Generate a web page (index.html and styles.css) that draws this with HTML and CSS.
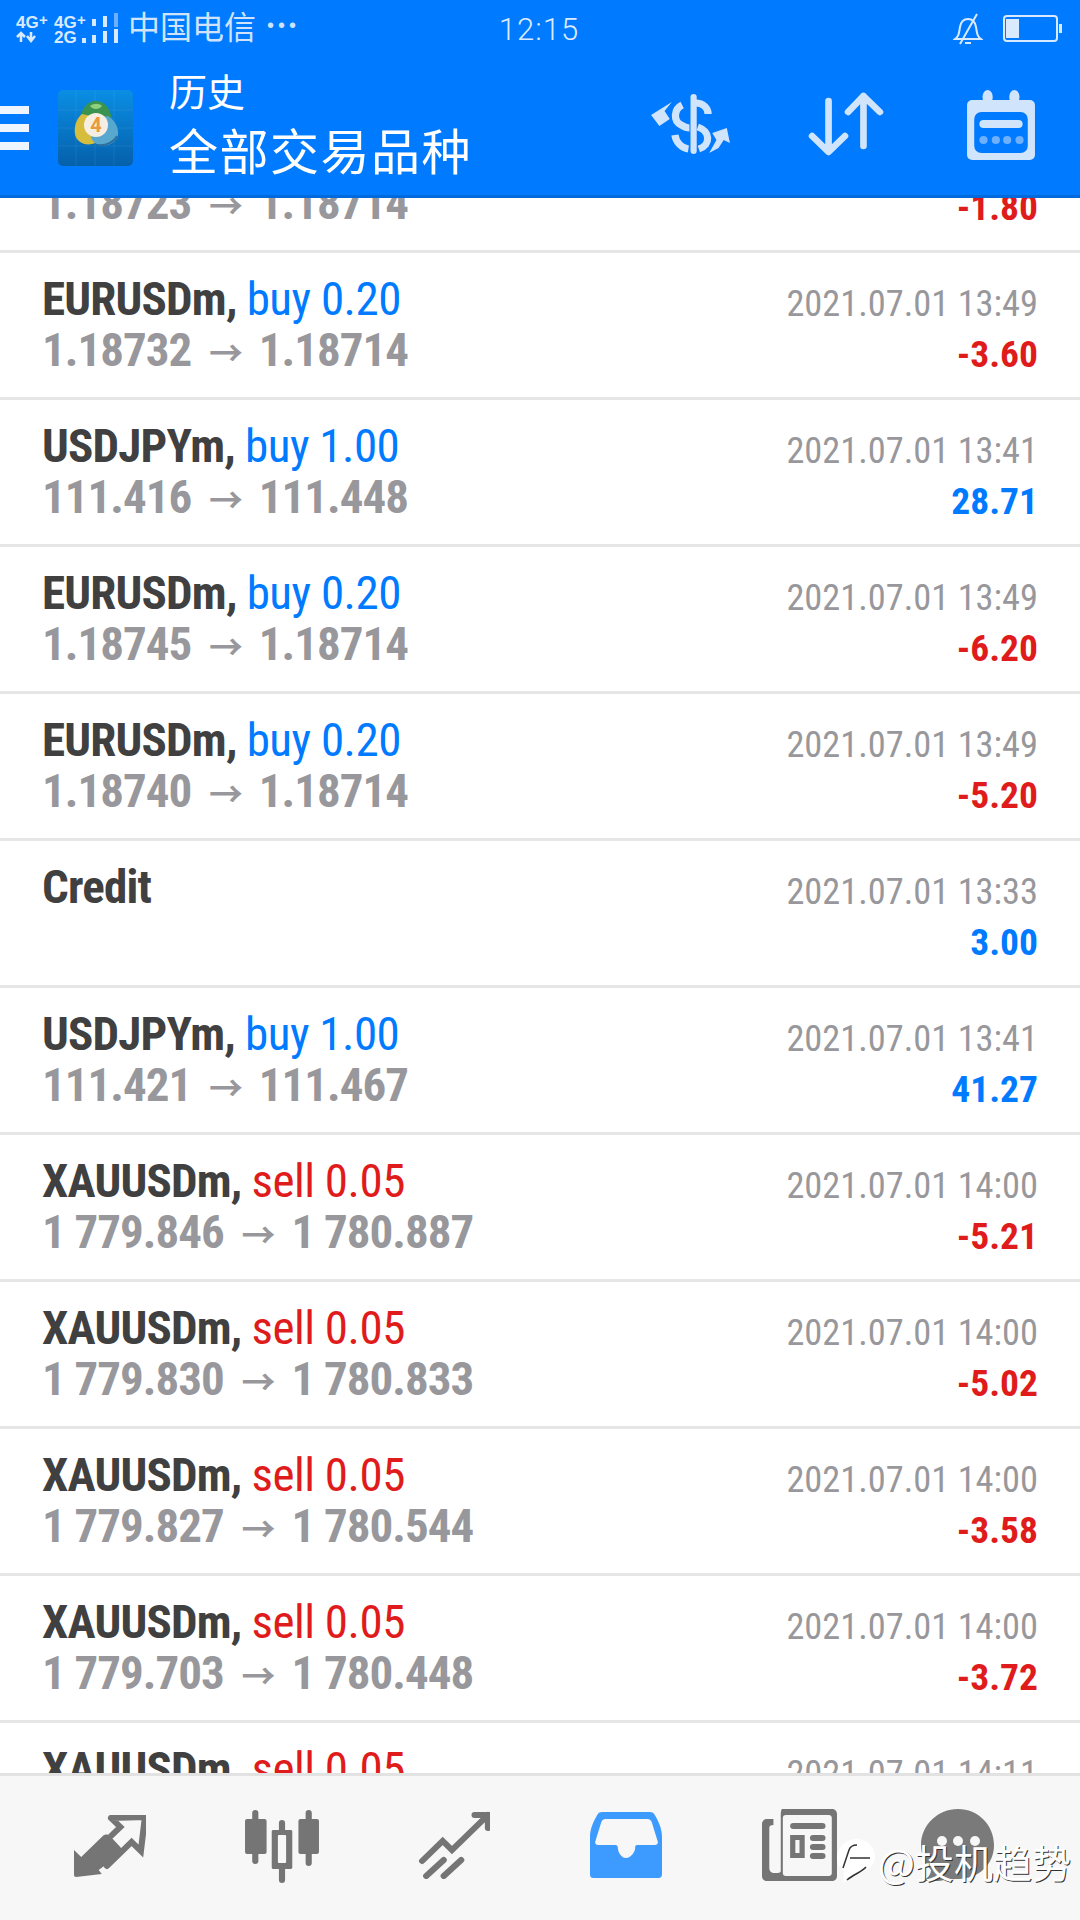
FILE: index.html
```html
<!DOCTYPE html>
<html lang="zh-CN">
<head>
    <meta charset="UTF-8">
    <meta name="viewport" content="width=device-width, initial-scale=1.0">
    <title>历史</title>
    <link rel="stylesheet" href="styles.css">
</head>
<body>
    <div class="screen">
        <header class="header">
            <div class="status">
                <div class="status-left">
                    <svg class="signal" width="105" height="32" viewBox="15 12 105 32">
                        <text x="16" y="27" class="net">4G</text><text x="39" y="24" class="net-sm">+</text>
                        <path d="M21 41v-7M17 36l4-4 4 4M31 31v7M27 35l4 5 4-5" class="net-arrows"/>
                        <text x="54" y="27" class="net">4G</text><text x="77" y="24" class="net-sm">+</text>
                        <text x="54" y="42" class="net">2G</text>
                        <rect x="82" y="37" width="4" height="5" class="bar"/>
                        <rect x="92" y="18" width="4" height="7" class="bar"/><rect x="92" y="34" width="4" height="8" class="bar"/>
                        <rect x="103" y="15" width="4" height="11" class="bar"/><rect x="103" y="30" width="4" height="12" class="bar"/>
                        <rect x="114" y="12" width="4" height="14" class="bar-dim"/><rect x="114" y="28" width="4" height="14" class="bar"/>
                    </svg>
                    <span class="carrier">中国电信</span>
                    <span class="dots">•••</span>
                </div>
                <div class="clock">12:15</div>
                <div class="status-right">
                    <svg width="30" height="32" viewBox="0 0 30 32" class="bell">
                        <path d="M2 26c4-3 4-6 5-12 1-6 4-8 8-8s7 2 8 8c1 6 1 9 5 12z"/>
                        <path d="M24 1 7 31M12 30h6"/>
                    </svg>
                    <svg width="60" height="28" viewBox="0 0 60 28" class="battery">
                        <rect x="1" y="1" width="53" height="25" rx="3" class="batt-shell"/>
                        <rect x="3" y="4" width="13" height="19" class="batt-level"/>
                        <rect x="56" y="9" width="3" height="9" class="batt-level"/>
                    </svg>
                </div>
            </div>
            <div class="toolbar">
                <div class="menu"><span></span><span></span><span></span></div>
                <svg class="logo" width="78" height="80" viewBox="57 88 78 80">
                    <defs>
                        <linearGradient id="logoBg" x1="0" y1="0" x2="0" y2="1">
                            <stop offset="0" stop-color="#0a8ee4"/><stop offset="1" stop-color="#0560ab"/>
                        </linearGradient>
                    </defs>
                    <rect x="58" y="90" width="75" height="76" rx="5" fill="url(#logoBg)"/>
                    <path d="M58 110h75M58 128h75M58 146h75M76 90v76M95 90v76M114 90v76" class="logo-grid"/>
                    <path d="M96 101c9 0 15 8 16 20l-16 6-16-6c1-12 7-20 16-20z" fill="#3a9450"/>
                    <path d="M90 106c4-3 9-3 12 0-3 4-9 4-12 0z" fill="#8fd07f"/>
                    <path d="M82 114c-6 5-8 13-7 20 1 7 9 12 17 10 5-1 8-4 9-8l-10-20z" fill="#d6bd3e"/>
                    <path d="M108 116c7 4 11 12 10 19-1 7-10 12-18 10-5-1-8-4-9-8l10-20z" fill="#58a7cf"/>
                    <path d="M98 145c8 1 16-3 19-9" class="logo-edge"/>
                    <circle cx="96" cy="125" r="12" fill="#f6eee2"/>
                    <text x="96" y="132" class="logo-four">4</text>
                </svg>
                <div class="titles">
                    <div class="title-small">历史</div>
                    <div class="title-big">全部交易品种</div>
                </div>
                <div class="actions">
                    <svg width="83" height="66" viewBox="645 92 80 66" preserveAspectRatio="none">
                        <path d="M688 97v54" class="ico-line"/>
                        <path d="M702 114c0-6-5-11-12-11M677 105c-8 4-9 16-1 20 3 2 6 3 8 3M692 127c12 4 13 18 1 22M670 135c1 7 6 13 13 14" class="ico-thin"/>
                        <path d="M647 115l20-13-7 9 5 8-10 7z M703 153l7-13-4-7 14-5 3 15-6-3-5 8z" class="ico-fill"/>
                    </svg>
                    <svg width="76" height="66" viewBox="799 94 74 66" preserveAspectRatio="none">
                        <path d="M819 103v50M803 138l16 16 16-16M853 148V98M838 114l15-16 16 16" class="ico-arrow"/>
                    </svg>
                    <svg class="act-cal" width="70" height="72" viewBox="953 89 68 72" preserveAspectRatio="none">
                        <ellipse cx="974" cy="97" rx="5" ry="7" class="ico-fill"/>
                        <ellipse cx="1000" cy="97" rx="5" ry="7" class="ico-fill"/>
                        <rect x="954" y="100" width="66" height="60" rx="5" class="ico-fill"/>
                        <rect x="961" y="112" width="52" height="41" rx="7" class="cal-hole"/>
                        <rect x="966" y="120" width="42" height="8" rx="4" class="ico-fill"/>
                        <circle cx="970" cy="140" r="4" class="cal-dot"/><circle cx="982" cy="140" r="4" class="cal-dot"/>
                        <circle cx="993" cy="140" r="4" class="cal-dot"/><circle cx="1005" cy="140" r="4" class="cal-dot"/>
                    </svg>
                </div>
            </div>
        </header>

        <main class="list-wrap">
            <div class="list">
                <div class="row">
                    <div><div class="pair">EURUSDm, <span class="buy">buy 0.20</span></div>
                    <div class="prices">1.18723 <span class="arr">→</span> 1.18714</div></div>
                    <div class="right"><div class="date">2021.07.01 13:49</div><div class="amount neg">-1.80</div></div>
                </div>
                <div class="row">
                    <div><div class="pair">EURUSDm, <span class="buy">buy 0.20</span></div>
                    <div class="prices">1.18732 <span class="arr">→</span> 1.18714</div></div>
                    <div class="right"><div class="date">2021.07.01 13:49</div><div class="amount neg">-3.60</div></div>
                </div>
                <div class="row">
                    <div><div class="pair">USDJPYm, <span class="buy">buy 1.00</span></div>
                    <div class="prices">111.416 <span class="arr">→</span> 111.448</div></div>
                    <div class="right"><div class="date">2021.07.01 13:41</div><div class="amount pos">28.71</div></div>
                </div>
                <div class="row">
                    <div><div class="pair">EURUSDm, <span class="buy">buy 0.20</span></div>
                    <div class="prices">1.18745 <span class="arr">→</span> 1.18714</div></div>
                    <div class="right"><div class="date">2021.07.01 13:49</div><div class="amount neg">-6.20</div></div>
                </div>
                <div class="row">
                    <div><div class="pair">EURUSDm, <span class="buy">buy 0.20</span></div>
                    <div class="prices">1.18740 <span class="arr">→</span> 1.18714</div></div>
                    <div class="right"><div class="date">2021.07.01 13:49</div><div class="amount neg">-5.20</div></div>
                </div>
                <div class="row">
                    <div><div class="pair">Credit</div></div>
                    <div class="right"><div class="date">2021.07.01 13:33</div><div class="amount pos">3.00</div></div>
                </div>
                <div class="row">
                    <div><div class="pair">USDJPYm, <span class="buy">buy 1.00</span></div>
                    <div class="prices">111.421 <span class="arr">→</span> 111.467</div></div>
                    <div class="right"><div class="date">2021.07.01 13:41</div><div class="amount pos">41.27</div></div>
                </div>
                <div class="row">
                    <div><div class="pair">XAUUSDm, <span class="sell">sell 0.05</span></div>
                    <div class="prices">1 779.846 <span class="arr">→</span> 1 780.887</div></div>
                    <div class="right"><div class="date">2021.07.01 14:00</div><div class="amount neg">-5.21</div></div>
                </div>
                <div class="row">
                    <div><div class="pair">XAUUSDm, <span class="sell">sell 0.05</span></div>
                    <div class="prices">1 779.830 <span class="arr">→</span> 1 780.833</div></div>
                    <div class="right"><div class="date">2021.07.01 14:00</div><div class="amount neg">-5.02</div></div>
                </div>
                <div class="row">
                    <div><div class="pair">XAUUSDm, <span class="sell">sell 0.05</span></div>
                    <div class="prices">1 779.827 <span class="arr">→</span> 1 780.544</div></div>
                    <div class="right"><div class="date">2021.07.01 14:00</div><div class="amount neg">-3.58</div></div>
                </div>
                <div class="row">
                    <div><div class="pair">XAUUSDm, <span class="sell">sell 0.05</span></div>
                    <div class="prices">1 779.703 <span class="arr">→</span> 1 780.448</div></div>
                    <div class="right"><div class="date">2021.07.01 14:00</div><div class="amount neg">-3.72</div></div>
                </div>
                <div class="row">
                    <div><div class="pair">XAUUSDm, <span class="sell">sell 0.05</span></div></div>
                    <div class="right"><div class="date">2021.07.01 14:11</div></div>
                </div>
            </div>
        </main>

        <nav class="nav">
            <svg width="72" height="64" viewBox="0 0 70 64" preserveAspectRatio="none" class="nav-icon nav-trade">
                <path d="M0 35l7 7 21-21c2-2 5-2 7 0l10 11c2 2 2 5 0 7L24 55l3 4-25 3c-1 0-2-1-2-2z" class="nav-fill"/>
                <path d="M36 3l33-1-4 34-9-9-24 24M36 3l9 9-9 9" class="nav-line"/>
            </svg>
            <svg width="76" height="76" viewBox="235 1808 74 76" preserveAspectRatio="none" class="nav-icon">
                <path d="M243 1812a3 3 0 0 1 6 0v6h6a2 2 0 0 1 2 2v31a2 2 0 0 1-2 2h-6v7a3 3 0 0 1-6 0v-7h-5a2 2 0 0 1-2-2v-31a2 2 0 0 1 2-2h5z" class="nav-fill"/>
                <path d="M295 1812a3 3 0 0 1 6 0v6h5a2 2 0 0 1 2 2v31a2 2 0 0 1-2 2h-5v9a3 3 0 0 1-6 0v-9h-5a2 2 0 0 1-2-2v-31a2 2 0 0 1 2-2h5z" class="nav-fill"/>
                <path fill-rule="evenodd" d="M269 1822a3 3 0 0 1 6 0v7h6a2 2 0 0 1 1 1v37a2 2 0 0 1-2 1h-5v11a3 3 0 0 1-6 0v-11h-6a2 2 0 0 1-1-1v-37a2 2 0 0 1 1-1h6zM268 1835v26a1 1 0 0 0 1 1h6a1 1 0 0 0 1-1v-26a1 1 0 0 0-1-1h-6a1 1 0 0 0-1 1z" class="nav-fill"/>
            </svg>
            <svg width="72" height="68" viewBox="404 1811 70 68" preserveAspectRatio="none" class="nav-icon nav-chart">
                <path d="M408 1861l20-20 9 9 35-35M459 1815h13v13M412 1876l17-16M429 1876l17-16" class="nav-line"/>
            </svg>
            <svg width="72" height="66" viewBox="589 1812 70 66" preserveAspectRatio="none" class="nav-icon nav-inbox">
                <path fill-rule="evenodd" d="M601 1812h46c3 0 4 1 5 3 4 7 7 14 7 22v37c0 3-1 4-4 4h-62c-3 0-4-1-4-4v-37c0-8 3-15 7-22 1-2 2-3 5-3zM604 1819c-2 0-3 1-4 3l-6 20c0 2 1 3 3 3h17c1 0 2 1 2 2 0 6 4 11 8 11s9-5 9-11c0-1 0-2 2-2h17c2 0 3-1 3-3l-6-20c-1-2-2-3-4-3z" class="nav-active"/>
            </svg>
            <svg width="75" height="72" viewBox="756 1809 72 72" preserveAspectRatio="none" class="nav-icon nav-news">
                <path fill-rule="evenodd" d="M775 1809h48c3 0 5 2 5 5v62c0 3-2 5-5 5h-62c-3 0-5-2-5-5v-52c0-3 2-5 5-5h6v6c-3 0-4 1-4 3v40c0 3 2 5 5 5h3c2 0 3-1 3-2v-57c0-3 1-5 1-5zM779 1815c-2 0-3 1-3 3v55c0 2 1 3 3 3h41c2 0 3-1 3-3v-55c0-2-1-3-3-3z" class="nav-fill"/>
                <rect x="783" y="1823" width="34" height="6" rx="3" class="nav-fill"/>
                <path fill-rule="evenodd" d="M783 1835h14v23h-14zM788 1840v13h4v-13z" class="nav-fill"/>
                <rect x="802" y="1835" width="15" height="6" rx="3" class="nav-fill"/>
                <rect x="802" y="1844" width="15" height="6" rx="3" class="nav-fill"/>
                <rect x="802" y="1853" width="15" height="6" rx="3" class="nav-fill"/>
            </svg>
            <svg width="74" height="72" viewBox="921 1809 74 72" class="nav-icon nav-more">
                <path d="M958 1809c20 0 36 16 36 36s-16 34-36 34c-8 0-13 1-20 2h-15c5-3 8-7 8-11-6-6-10-15-10-25 0-20 17-36 37-36z" class="chat-fill"/>
                <circle cx="942" cy="1841" r="5" class="chat-dot"/><circle cx="958" cy="1841" r="5" class="chat-dot"/><circle cx="975" cy="1841" r="5" class="chat-dot"/>
            </svg>
        </nav>

        <div class="watermark">
            <svg width="40" height="46" viewBox="0 0 40 46" class="wm-logo">
                <path class="wm-bubble" d="M21 1C10 1 1 9 1 20c0 6 3 10 7 13l-1 12c5-5 10-9 16-10 9-2 16-8 16-16C39 9 31 1 21 1z"/>
                <path class="wm-mark" d="M7 30 13 12c1-3 4-5 8-5M14 20h20M30 29c-4 5-12 7-19 13"/>
            </svg>
            <span>@投机趋势</span>
        </div>
    </div>
</body>
</html>
```

FILE: styles.css
```css
* {
    box-sizing: border-box;
}
body {
    margin: 0;
    background: #fff;
    font-family: Roboto, "Noto Sans CJK SC", sans-serif;
}
.screen {
    position: relative;
    width: 1080px;
    height: 1920px;
    display: flex;
    flex-direction: column;
    overflow: hidden;
}

/* top blue area */
.header {
    height: 198px;
    flex: none;
    background: #007aff;
    border-bottom: 3px solid #0069dc;
    position: relative;
    z-index: 2;
    color: #fff;
}
.status {
    height: 58px;
    display: grid;
    grid-template-columns: 1fr auto 1fr;
    align-items: center;
    padding: 0 17px 0 15px;
}
.status-left {
    display: flex;
    align-items: center;
}
.signal {
    fill: #d9eaff;
}
.net {
    font: bold 17px "Liberation Sans", sans-serif;
}
.net-sm {
    font: bold 15px "Liberation Sans", sans-serif;
}
.net-arrows {
    fill: none;
    stroke: #d9eaff;
    stroke-width: 2.5;
}
.bar {
    fill: #d9eaff;
}
.bar-dim {
    fill: #6db0ff;
}
.carrier {
    margin-left: 8px;
    margin-bottom: 8px;
    font: 32px/1 "Noto Sans CJK SC", sans-serif;
    color: #cfe3fb;
}
.dots {
    margin-left: 11px;
    margin-bottom: 8px;
    font: 20px/1 "Liberation Sans", sans-serif;
    letter-spacing: 4px;
    color: #cfe3fb;
}
.clock {
    font: 300 31px/1 Roboto, sans-serif;
    letter-spacing: 1px;
    color: #dcebff;
}
.status-right {
    display: flex;
    justify-content: flex-end;
    align-items: center;
    gap: 20px;
}
.bell {
    fill: none;
    stroke: #d9eaff;
    stroke-width: 2;
}
.batt-shell {
    fill: none;
    stroke: #d9eaff;
    stroke-width: 2;
}
.batt-level {
    fill: #d9eaff;
}

.toolbar {
    display: flex;
    align-items: center;
    height: 137px;
    padding-top: 3px;
}
.menu {
    width: 29px;
    display: flex;
    flex-direction: column;
    gap: 10px;
}
.menu span {
    height: 8px;
    background: #eef5ff;
}
.logo {
    margin-left: 28px;
}
.logo-grid {
    fill: none;
    stroke: #fff;
    stroke-width: 1;
    opacity: 0.07;
}
.logo-edge {
    fill: none;
    stroke: #2b6f9c;
    stroke-width: 2;
}
.logo-four {
    font: bold 20px Roboto, sans-serif;
    fill: #e89a3c;
    text-anchor: middle;
}
.titles {
    margin-left: 34px;
    margin-bottom: 10px;
    font-family: "Noto Sans CJK SC", sans-serif;
}
.title-small {
    font-size: 38px;
    line-height: 48px;
}
.title-big {
    font-size: 49px;
    line-height: 62px;
    margin-top: 4px;
    letter-spacing: 1.5px;
}
.actions {
    margin-left: auto;
    margin-right: 44px;
    margin-bottom: 6px;
    display: flex;
    align-items: center;
    gap: 76px;
}
.act-cal {
    margin-left: 6px;
}
.ico-line {
    fill: none;
    stroke: #d0e4fc;
    stroke-width: 6;
    stroke-linecap: round;
}
.ico-thin {
    fill: none;
    stroke: #d0e4fc;
    stroke-width: 7;
}
.ico-fill {
    fill: #d0e4fc;
}
.ico-arrow {
    fill: none;
    stroke: #d0e4fc;
    stroke-width: 6.5;
    stroke-linecap: round;
    stroke-linejoin: round;
}
.cal-hole {
    fill: #007aff;
}
.cal-dot {
    fill: #6fb0fd;
}

/* trade list */
.list-wrap {
    flex: 1;
    overflow: hidden;
}
.list {
    margin-top: -92px;
}
.row {
    height: 147px;
    display: flex;
    justify-content: space-between;
    padding: 20px 42px 0 42px;
    border-bottom: 3px solid #e6e6e6;
}
.pair,
.prices {
    font-size: 47px;
    line-height: 51px;
    font-weight: 700;
    font-stretch: 75%;
    white-space: nowrap;
}
.pair {
    letter-spacing: -0.8px;
    color: #404040;
}
.buy,
.sell {
    font-weight: 400;
    letter-spacing: -0.5px;
}
.buy {
    color: #007aff;
}
.sell {
    color: #e01b1b;
}
.prices {
    letter-spacing: -1px;
    color: #98989c;
}
.arr {
    font-size: 34px;
    font-weight: 700;
    margin: 0 7px 0 8px;
}
.right {
    text-align: right;
    padding-top: 5px;
}
.date {
    font-size: 36.4px;
    line-height: 51px;
    font-stretch: 75%;
    color: #98989c;
}
.amount {
    font-size: 37.5px;
    line-height: 51px;
    font-weight: 700;
    font-stretch: 75%;
}
.neg {
    color: #e01b1b;
}
.pos {
    color: #007aff;
}

/* bottom tabs */
.nav {
    height: 147px;
    flex: none;
    background: #f7f7f7;
    border-top: 3px solid #e2e2e2;
    display: flex;
    align-items: flex-start;
    gap: 98px;
    padding: 33px 0 0 74px;
    position: relative;
    z-index: 2;
}
.nav-icon {
    flex: none;
}
.nav-trade {
    margin-top: 6px;
}
.nav-chart {
    margin-top: 2px;
}
.nav-inbox {
    margin-top: 3px;
    margin-left: 2px;
}
.nav-news {
    margin-left: 2px;
}
.nav-more {
    margin-left: -14px;
}
.nav-fill {
    fill: #757575;
}
.nav-line {
    fill: none;
    stroke: #757575;
    stroke-width: 6;
    stroke-linecap: round;
}
.nav-active {
    fill: #3d9bff;
}
.chat-fill {
    fill: #7a7a7a;
}
.chat-dot {
    fill: #f7f7f7;
}

/* watermark over the tabs */
.watermark {
    position: absolute;
    right: 9px;
    bottom: 36px;
    z-index: 3;
    display: flex;
    align-items: center;
    gap: 2px;
    font: 39px/1 "Noto Sans CJK SC", sans-serif;
    color: #fff;
    text-shadow: 1px 1px 0 #333;
}
.wm-bubble {
    fill: #fff;
}
.wm-mark {
    fill: none;
    stroke: #333;
    stroke-width: 1.5;
}
```
